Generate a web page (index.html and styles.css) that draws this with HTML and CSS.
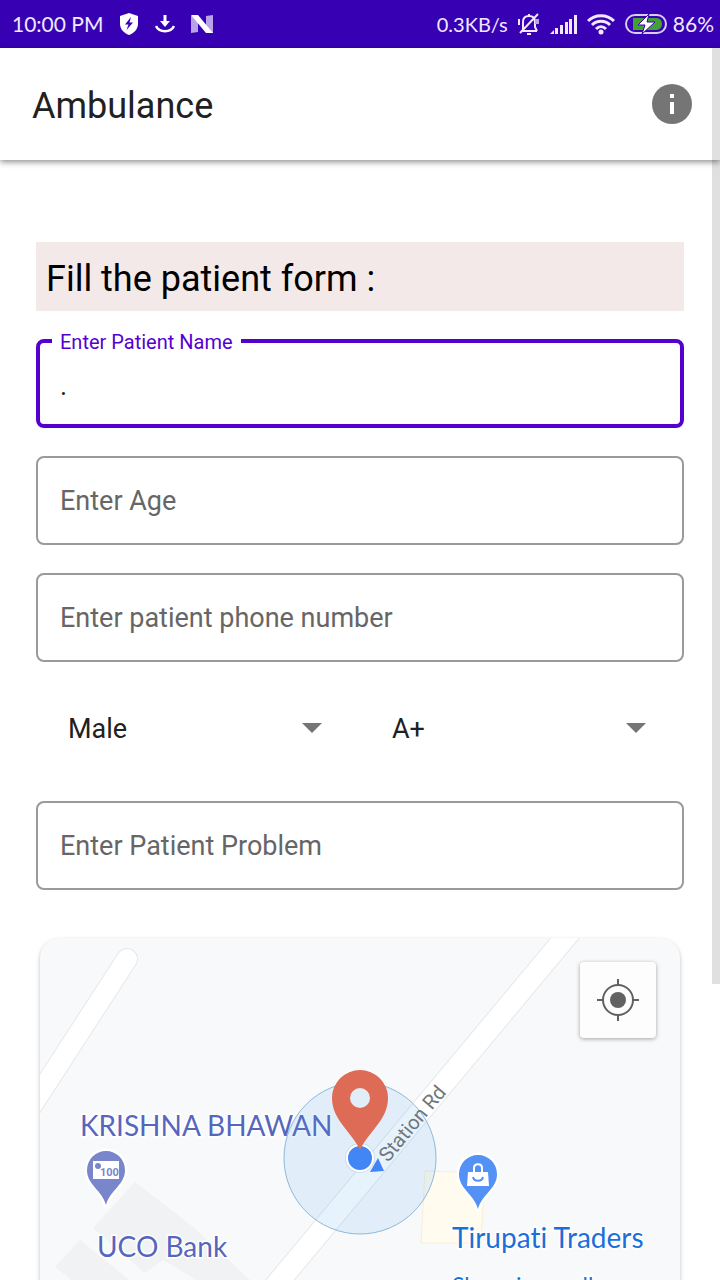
FILE: index.html
```html
<!DOCTYPE html>
<html lang="en">
<head>
  <meta charset="UTF-8">
  <meta name="viewport" content="width=device-width, initial-scale=1.0">
  <title>Ambulance</title>
  <link rel="stylesheet" href="styles.css">
</head>
<body>
  <div class="status-bar">
    <div class="status-left">
      <span>10:00 PM</span>
      <svg width="20" height="24" viewBox="0 0 20 24">
        <path d="M10 1L19 4V12C19 17 15 21 10 23C5 21 1 17 1 12V4Z" fill="#fff"/>
        <path d="M12 5L6 12.500H9.500L7.500 18L14 10.500H10.500Z" fill="#3700b3"/>
      </svg>
      <svg width="20" height="20" viewBox="0 0 20 20" fill="none" stroke="#fff">
        <path d="M10 1V9" stroke-width="3"/>
        <path d="M5 7H15L10 13Z" fill="#fff" stroke="none"/>
        <path d="M1 12C4 19 16 19 19 12" stroke-width="2.500"/>
      </svg>
      <svg width="22" height="20" viewBox="0 0 22 20">
        <path d="M0 2H7V18L0 19ZM15 2L22 1V19H15Z" fill="#b9a2ea"/>
        <path d="M0 1H7L22 19H15Z" fill="#fff"/>
      </svg>
    </div>
    <div class="status-right">
      <span class="net-speed">0.3KB/s</span>
      <svg width="24" height="24" viewBox="0 0 24 24" fill="none" stroke="#f1e8ff" stroke-width="2">
        <path d="M4 19H20M6 18V10C6 6 8 4 12 4S18 6 18 10V15L20 19M10 22H14M12 2V4M21 2L3 21M2 7V13"/>
        <path d="M18 7H22V12H18Z" fill="#b9a2ea" stroke="none"/>
      </svg>
      <svg width="28" height="20" viewBox="0 0 28 20" fill="#f1e8ff">
        <path d="M0 20L4 16V20ZM5 14H8V20H5ZM10 11H13V20H10ZM15 8H18V20H15ZM19 5H22V20H19ZM24 1H27V20H24Z"/>
      </svg>
      <svg width="28" height="22" viewBox="0 0 28 22" fill="none" stroke="#f1e8ff" stroke-width="3">
        <path d="M1 8C8 1 20 1 27 8M5 12C10 7 18 7 23 12M9 16C12 13 16 13 19 16"/>
        <circle cx="14" cy="19" r="2.500" fill="#f1e8ff" stroke="none"/>
      </svg>
      <div class="battery">
        <svg width="44" height="22" viewBox="0 0 44 22">
          <rect x="2" y="2" width="40" height="18" rx="9" fill="none" stroke="#d9ccf5" stroke-width="2"/>
          <path d="M9 5H33Q38 6 38 11T33 17H9Z" fill="#43a033"/>
          <path d="M25 1L14 12H21L18 21L31 9H23Z" fill="#fff" stroke="#3700b3"/>
        </svg>
        <span>86%</span>
      </div>
    </div>
  </div>

  <div class="screen">
    <header class="app-bar">
      <h1>Ambulance</h1>
      <button class="info-button" type="button" aria-label="Information">
        <svg width="40" height="40" viewBox="0 0 40 40">
          <circle cx="20" cy="20" r="20" fill="#757575"/>
          <path d="M18 10H22V14H18ZM18 18H22V30H18Z" fill="#fff"/>
        </svg>
      </button>
    </header>

    <main class="content">
      <form class="patient-form">
        <h2>Fill the patient form :</h2>

        <div class="field">
          <input type="text" id="name" placeholder=" " value=".">
          <label for="name">Enter Patient Name</label>
        </div>
        <div class="field">
          <input type="text" id="age" placeholder=" ">
          <label for="age">Enter Age</label>
        </div>
        <div class="field">
          <input type="tel" id="phone" placeholder=" ">
          <label for="phone">Enter patient phone number</label>
        </div>

        <div class="spinners">
          <div class="spinner">
            <select id="gender" aria-label="Gender">
              <option>Male</option>
              <option>Female</option>
              <option>Other</option>
            </select>
          </div>
          <div class="spinner">
            <select id="blood" aria-label="Blood group">
              <option>A+</option>
              <option>A-</option>
              <option>B+</option>
              <option>B-</option>
              <option>AB+</option>
              <option>AB-</option>
              <option>O+</option>
              <option>O-</option>
            </select>
          </div>
        </div>

        <div class="field">
          <input type="text" id="problem" placeholder=" ">
          <label for="problem">Enter Patient Problem</label>
        </div>
      </form>

      <section class="map-card" aria-label="Map">
        <svg class="map" viewBox="0 0 640 400" preserveAspectRatio="xMidYMin slice">
          <!-- buildings -->
          <path d="M95 244L152 288L210 342L190 362L123 322L105 335L53 290Z" fill="#f1f2f3"/>
          <path d="M40 302L92 344L70 372L15 329Z" fill="#f1f2f3"/>
          <path d="M385 233L445 235L441 305L381 305Z" fill="#fffbee" stroke="#f7efd8"/>

          <!-- roads -->
          <g fill="none" stroke-linecap="round">
            <path d="M87 21L-20 186" stroke="#e6e8ea" stroke-width="22"/>
            <path d="M87 21L-20 186" stroke="#fff" stroke-width="20"/>
            <path d="M550 -30L190 402" stroke="#e6e8ea" stroke-width="23"/>
            <path d="M550 -30L190 402" stroke="#fff" stroke-width="21"/>
          </g>

          <text class="place place-bank" x="40" y="198">KRISHNA BHAWAN</text>
          <text class="place place-bank" x="57" y="319">UCO Bank</text>

          <circle cx="320" cy="220" r="76" fill="#42a5eb" fill-opacity="0.13" stroke="#8db9dc"/>
          <text class="street" transform="translate(348 225) rotate(-50)">Station Rd</text>

          <!-- current position -->
          <path d="M330 234L344 233L338 220Z" fill="#4285f4"/>
          <circle cx="320" cy="220" r="15" fill="#b8c9d8" fill-opacity="0.5"/>
          <circle cx="320" cy="220" r="14" fill="#fff"/>
          <circle cx="320" cy="220" r="12" fill="#4285f4"/>
          <path d="M320 212C312 194 292 182 292 160A28 28 0 0 1 348 160C348 182 328 194 320 212Z" fill="#dd6b55"/>
          <circle cx="320" cy="160" r="10" fill="#e1eef8"/>

          <!-- bank pin -->
          <path d="M66 267C62 252 47 247 47 232A19 19 0 0 1 85 232C85 247 70 252 66 267Z" fill="#7986cb" stroke="#fff" stroke-width="5" stroke-linejoin="round" paint-order="stroke"/>
          <rect x="53" y="223" width="26" height="18" fill="#fff"/>
          <circle cx="58" cy="228" r="3" fill="#7986cb"/>
          <text class="note" x="60" y="238">100</text>

          <!-- shop pin -->
          <path d="M438 271C434 256 419 251 419 236A19 19 0 0 1 457 236C457 251 442 256 438 271Z" fill="#5491f5" stroke="#fff" stroke-width="5" stroke-linejoin="round" paint-order="stroke"/>
          <path d="M428 234H448L449 248H427Z" fill="#fff"/>
          <path d="M434 234V230C434 225 442 225 442 230V234" fill="none" stroke="#fff" stroke-width="2"/>
          <path d="M433 239C434 244 442 244 443 239" fill="none" stroke="#5491f5" stroke-width="2"/>

          <text class="place place-shop" x="412" y="310">Tirupati Traders</text>
          <text class="place place-shop place-kind" x="412" y="356">Shopping mall</text>
        </svg>
        <button class="locate-button" type="button" aria-label="My location">
          <svg width="44" height="44" viewBox="0 0 44 44" fill="none" stroke="#616161" stroke-width="2">
            <circle cx="22" cy="22" r="15"/>
            <circle cx="22" cy="22" r="8" fill="#616161" stroke="none"/>
            <path d="M22 1V7M22 37V43M1 22H7M37 22H43"/>
          </svg>
        </button>
      </section>
    </main>

    <div class="scroll-thumb"></div>
  </div>
</body>
</html>
```
FILE: styles.css
```css
:root {
  --primary: #5600d0;
  --primary-dark: #3700b3;
  --text: #212121;
  --hint: #666;
  --outline: #9a9a9a;
}

* {
  box-sizing: border-box;
}

body {
  margin: 0;
  height: 100vh;
  display: flex;
  flex-direction: column;
  overflow: hidden;
  font-family: Roboto, sans-serif;
  color: var(--text);
  background: #fff;
}

svg {
  display: block;
}

/* status bar */
.status-bar {
  display: flex;
  justify-content: space-between;
  align-items: center;
  height: 48px;
  flex: none;
  padding: 0 6px 0 12px;
  background: var(--primary-dark);
  color: #f1e8ff;
  font-family: Lato, sans-serif;
  font-size: 21px;
  line-height: 24px;
}

.status-left,
.status-right,
.battery {
  display: flex;
  align-items: center;
}

.status-left {
  gap: 16px;
}

.status-right {
  gap: 9px;
}

.battery {
  gap: 5px;
}

.net-speed {
  font-size: 20px;
}

/* screen */
.screen {
  position: relative;
  flex: 1;
  min-height: 0;
  display: flex;
  flex-direction: column;
}

.app-bar {
  position: relative;
  display: flex;
  justify-content: space-between;
  align-items: center;
  height: 112px;
  flex: none;
  padding: 0 28px 0 32px;
  background: #fff;
  box-shadow: 0 2px 6px rgba(0, 0, 0, 0.45);
}

.app-bar h1 {
  margin: 0;
  padding-top: 4px;
  font-size: 36px;
  font-weight: 400;
}

.info-button {
  padding: 0;
  border: none;
  background: none;
  cursor: pointer;
}

.content {
  flex: 1;
  min-height: 0;
  overflow-y: auto;
  scrollbar-width: none;
  padding: 82px 36px 36px;
}

.scroll-thumb {
  position: absolute;
  top: 0;
  right: 0;
  width: 8px;
  height: 76%;
  background: rgba(0, 0, 0, 0.12);
}

/* form */
.patient-form {
  display: flex;
  flex-direction: column;
  gap: 28px;
}

.patient-form h2 {
  margin: 0;
  padding: 6px 10px 0;
  background: #f4e9e9;
  color: #000;
  font-size: 36px;
  font-weight: 400;
  line-height: 63px;
}

.field {
  position: relative;
}

.field input {
  display: block;
  width: 100%;
  height: 89px;
  padding: 14px 22px 0;
  border: 2px solid var(--outline);
  border-radius: 8px;
  background: #fff;
  color: var(--text);
  font-family: inherit;
  font-size: 27px;
  outline: none;
}

.field label {
  position: absolute;
  top: 29px;
  left: 16px;
  padding: 0 8px;
  color: var(--hint);
  font-size: 27px;
  line-height: 32px;
  pointer-events: none;
}

.field input:focus,
.field input:not(:placeholder-shown) {
  padding: 4px 20px 0;
  border: 4px solid var(--primary);
}

.field input:focus + label,
.field input:not(:placeholder-shown) + label {
  top: -9px;
  background: #fff;
  color: var(--primary);
  font-size: 20px;
  line-height: 24px;
}

.spinners {
  display: grid;
  grid-template-columns: 1fr 1fr;
  margin-bottom: 8px;
}

.spinner {
  position: relative;
}

.spinner select {
  width: 100%;
  height: 75px;
  padding: 2px 64px 0 32px;
  border: none;
  background: none;
  color: var(--text);
  font-family: inherit;
  font-size: 27px;
  appearance: none;
  cursor: pointer;
}

.spinner::after {
  content: "";
  position: absolute;
  top: calc(50% - 5px);
  right: 38px;
  border: 10px solid transparent;
  border-top-color: #757575;
  border-bottom: none;
  pointer-events: none;
}

/* map */
.map-card {
  position: relative;
  height: 400px;
  margin: 48px 4px 0;
  overflow: hidden;
  border-radius: 20px;
  background: #f8f9fb;
  box-shadow: 0 2px 4px rgba(0, 0, 0, 0.25);
}

.map {
  width: 100%;
  height: 100%;
}

.place {
  font-family: Lato, sans-serif;
  font-size: 28px;
  font-variant-ligatures: none;
  stroke: #fff;
  stroke-width: 3px;
  paint-order: stroke;
}

.place-bank {
  fill: #5766bd;
}

.place-shop {
  fill: #1b70d8;
}

.place-kind {
  font-size: 23px;
}

.street {
  font-size: 20px;
  fill: #6f767c;
}

.note {
  font-size: 11px;
  font-weight: 700;
  fill: #7986cb;
}

.locate-button {
  position: absolute;
  top: 24px;
  right: 24px;
  display: flex;
  align-items: center;
  justify-content: center;
  width: 76px;
  height: 76px;
  padding: 0;
  border: none;
  border-radius: 4px;
  background: #fdfdfd;
  box-shadow: 0 1px 4px rgba(0, 0, 0, 0.35);
  cursor: pointer;
}
```
